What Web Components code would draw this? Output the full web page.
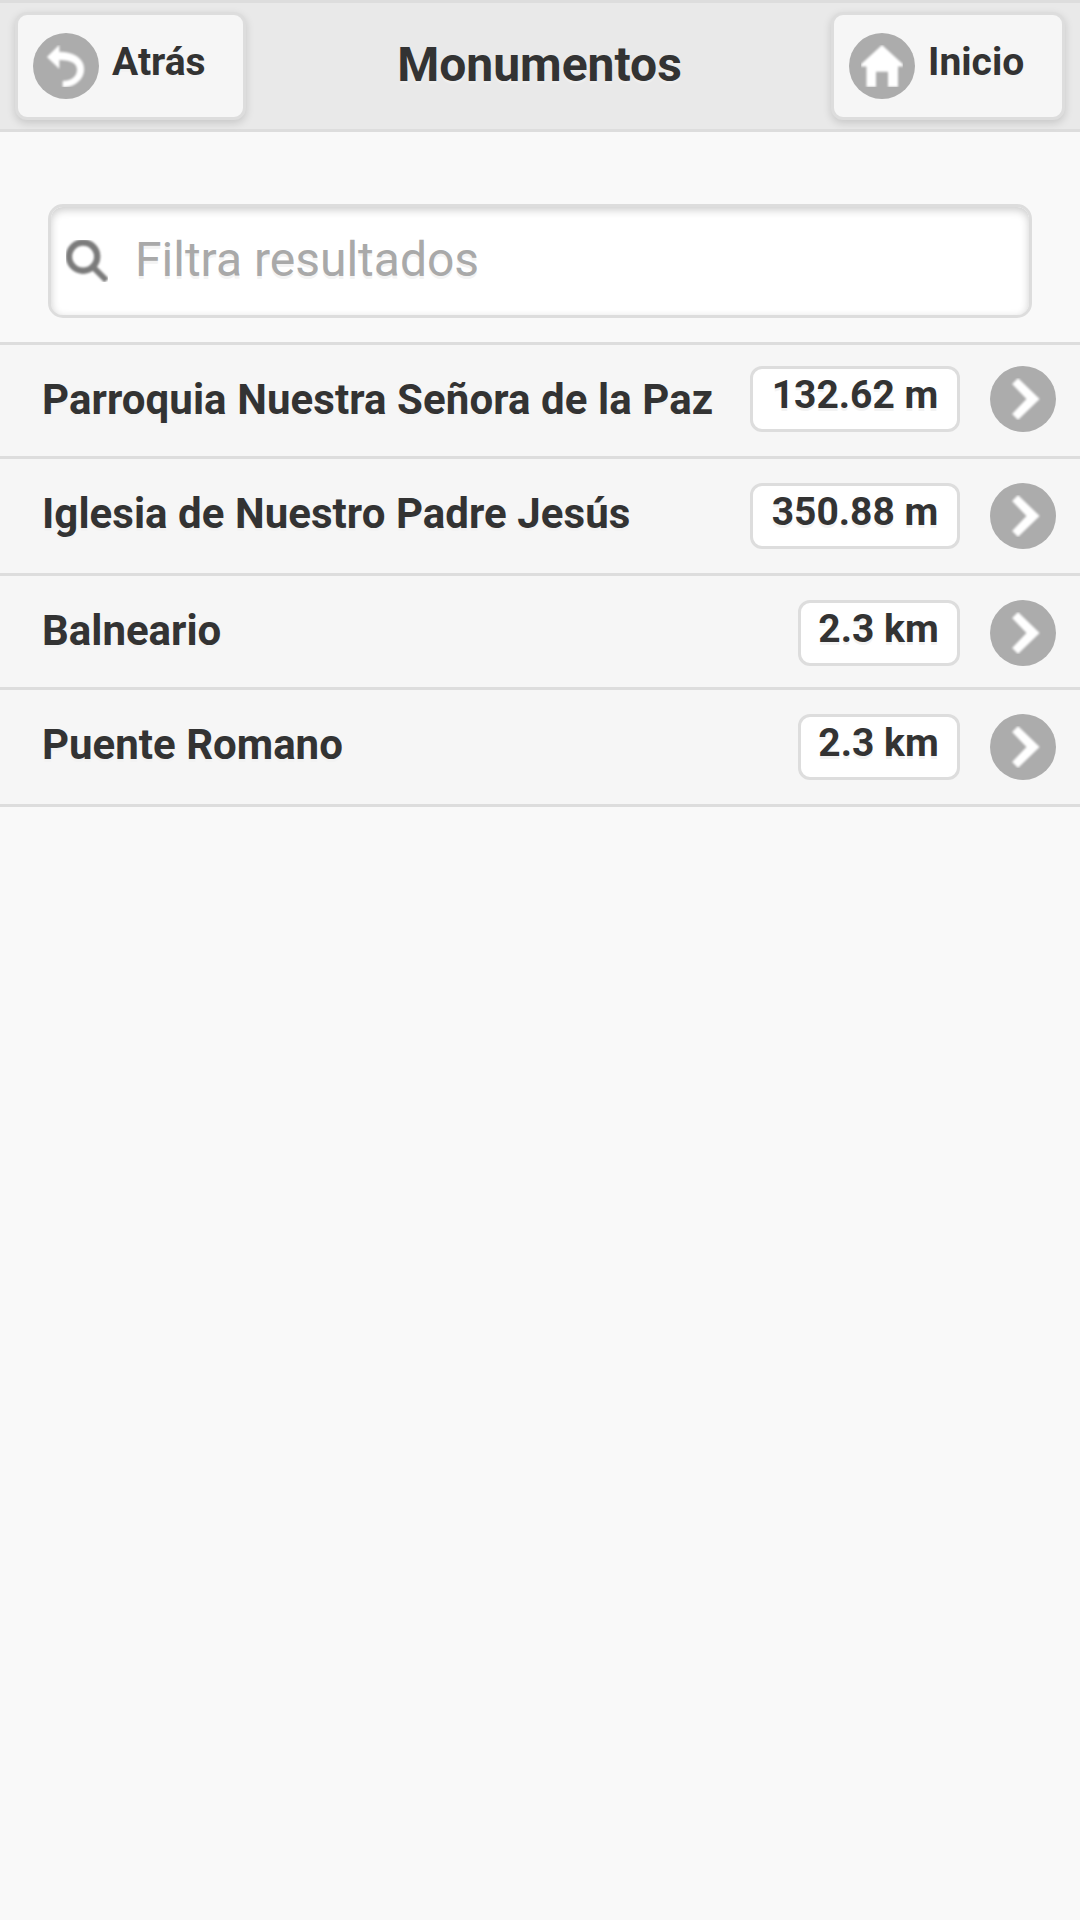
<!DOCTYPE html>
<html lang="es">
<head>
<meta charset="utf-8">
<title>Monumentos</title>
<style>
html, body { margin: 0; background: #f9f9f9; }
body { min-height: 1920px; font-family: Roboto, "Noto Sans", sans-serif; color: #333; }
</style>
</head>
<body>
<app-header>
  <nav-button slot="start" icon="back" style="--w: 225px">Atrás</nav-button>
  Monumentos
  <nav-button slot="end" icon="home" style="--w: 228px">Inicio</nav-button>
</app-header>
<filter-box placeholder="Filtra resultados"></filter-box>
<place-list>
  <place-item style="--h: 111px; --icon-top: 21px; --badge: 210px; letter-spacing: .08px" distance="132.62 m">Parroquia Nuestra Señora de la Paz</place-item>
  <place-item style="--h: 114px; --badge: 210px; letter-spacing: .05px" distance="350.88 m">Iglesia de Nuestro Padre Jesús</place-item>
  <place-item style="--h: 111px; --badge: 162px; --nudge: 1px" distance="2.3 km">Balneario</place-item>
  <place-item style="--h: 114px; --badge: 162px; --nudge: 1px" distance="2.3 km">Puente Romano</place-item>
</place-list>
<script>
class Base extends HTMLElement {
  constructor() {
    super();
    this.attachShadow({ mode: 'open' });
  }
  connectedCallback() {
    this.shadowRoot.innerHTML = '<style>:host, * { box-sizing: border-box; }' + this.css() + '</style>' + this.html();
  }
}

const GLYPHS = {
  back: '<path stroke="#fff" stroke-width=".7" d="M2.3 12 14 .5V7.2C30 7.2 38.8 14.2 38.8 24.2 38.8 34 30 42 18 42V36.2C27 36.2 32.3 31 32.3 24.8 32.3 18 26 14.7 14 14.7V23.3Z"/>',
  home: '<path d="M21 0 42 19.3V21.6H37V42H27V26.7H15V42H5.5V21.6H0V19.3Z"/>',
  next: '<path stroke="#fff" stroke-width=".7" d="M16 .5 37.3 21 16 41.5 10.5 36 24.8 21 10.5 6Z"/>'
};

customElements.define('disc-icon', class extends Base {
  css() {
    return `:host { display: flex; flex: none; width: 66px; height: 66px; padding: 12px; border-radius: 50%; background: #acacac; }
      svg { display: block; width: 42px; height: 42px; fill: #fff; overflow: hidden; }
      g { filter: blur(.8px); }`;
  }
  html() { return `<svg viewBox="0 0 42 42"><g>${GLYPHS[this.getAttribute('name')]}</g></svg>`; }
});

customElements.define('nav-button', class extends Base {
  css() {
    return `:host { display: flex; width: calc(var(--w) + 6px); height: 108px; padding: 18px 15px; gap: 13px;
        border: 3px solid #ddd; border-radius: 12px; background: #f6f6f6;
        box-shadow: 0 3px 9px rgba(0,0,0,.15); font-size: 39px; font-weight: 700; text-shadow: 0 3px 0 #f3f3f3; }
      span { line-height: 58px; white-space: nowrap; }`;
  }
  html() { return `<disc-icon name="${this.getAttribute('icon')}"></disc-icon><span><slot></slot></span>`; }
});

customElements.define('app-header', class extends Base {
  css() {
    return `:host { display: grid; grid-template-columns: 1fr auto 1fr; height: 132px; padding: 9px 15px 0;
        border: solid #ddd; border-width: 3px 0; background: #e9e9e9; }
      h1 { margin: 0; padding-right: 1px; font-size: 48px; font-weight: 700; line-height: 105px; text-shadow: 0 3px 0 #eee; }
      .end { justify-self: end; }`;
  }
  html() { return `<div><slot name="start"></slot></div><h1><slot></slot></h1><div class="end"><slot name="end"></slot></div>`; }
});

customElements.define('filter-box', class extends Base {
  css() {
    return `:host { display: block; padding: 72px 48px 24px; }
      label { display: flex; align-items: flex-start; height: 114px; padding: 0 15px; gap: 27px; border: 3px solid #ddd; border-radius: 15px;
        background: #fff; box-shadow: inset 0 3px 9px rgba(0,0,0,.2); }
      svg { flex: none; width: 42px; height: 42px; margin-top: 33px; }
      g { fill: none; stroke: #7b7b7b; filter: blur(.8px); }
      input { flex: 1; min-width: 0; height: 105px; padding: 0; border: 0; outline: 0; background: none;
        font: 400 48px Roboto, "Noto Sans", sans-serif; color: #333; text-shadow: 0 3px 0 #f3f3f3; }
      input::placeholder { color: #a9a9a9; opacity: 1; }`;
  }
  html() {
    return `<label><svg viewBox="0 0 42 42"><g><circle cx="17.1" cy="16.6" r="14.1" stroke-width="6.4"/><path d="M27 27 40.5 40.5" stroke-width="6"/></g></svg>
      <input type="text" placeholder="${this.getAttribute('placeholder')}"></label>`;
  }
});

customElements.define('place-list', class extends Base {
  css() { return ':host { display: flex; flex-direction: column; border-top: 3px solid #ddd; }'; }
  html() { return '<slot></slot>'; }
});

customElements.define('place-item', class extends Base {
  css() {
    return `:host { display: flex; align-items: flex-start; height: calc(var(--h) + 3px); padding: 0 24px 0 42px;
        border-bottom: 3px solid #ddd; background: #f6f6f6; font-weight: 700; text-shadow: 0 3px 0 #f3f3f3; }
      .name { flex: 1; padding-top: 27px; font-size: 42px; line-height: 55px; white-space: nowrap; }
      .count { width: var(--badge); height: 66px; margin: var(--icon-top, 24px) 30px 0 0; padding-right: var(--nudge, 0);
        border: 3px solid #ddd; border-radius: 12px;
        background: #fff; font-size: 39px; line-height: 52px; letter-spacing: 0; text-align: center; white-space: nowrap; }
      disc-icon { margin-top: var(--icon-top, 24px); }`;
  }
  html() {
    return `<span class="name"><slot></slot></span><span class="count">${this.getAttribute('distance')}</span><disc-icon name="next"></disc-icon>`;
  }
});
</script>
</body>
</html>
